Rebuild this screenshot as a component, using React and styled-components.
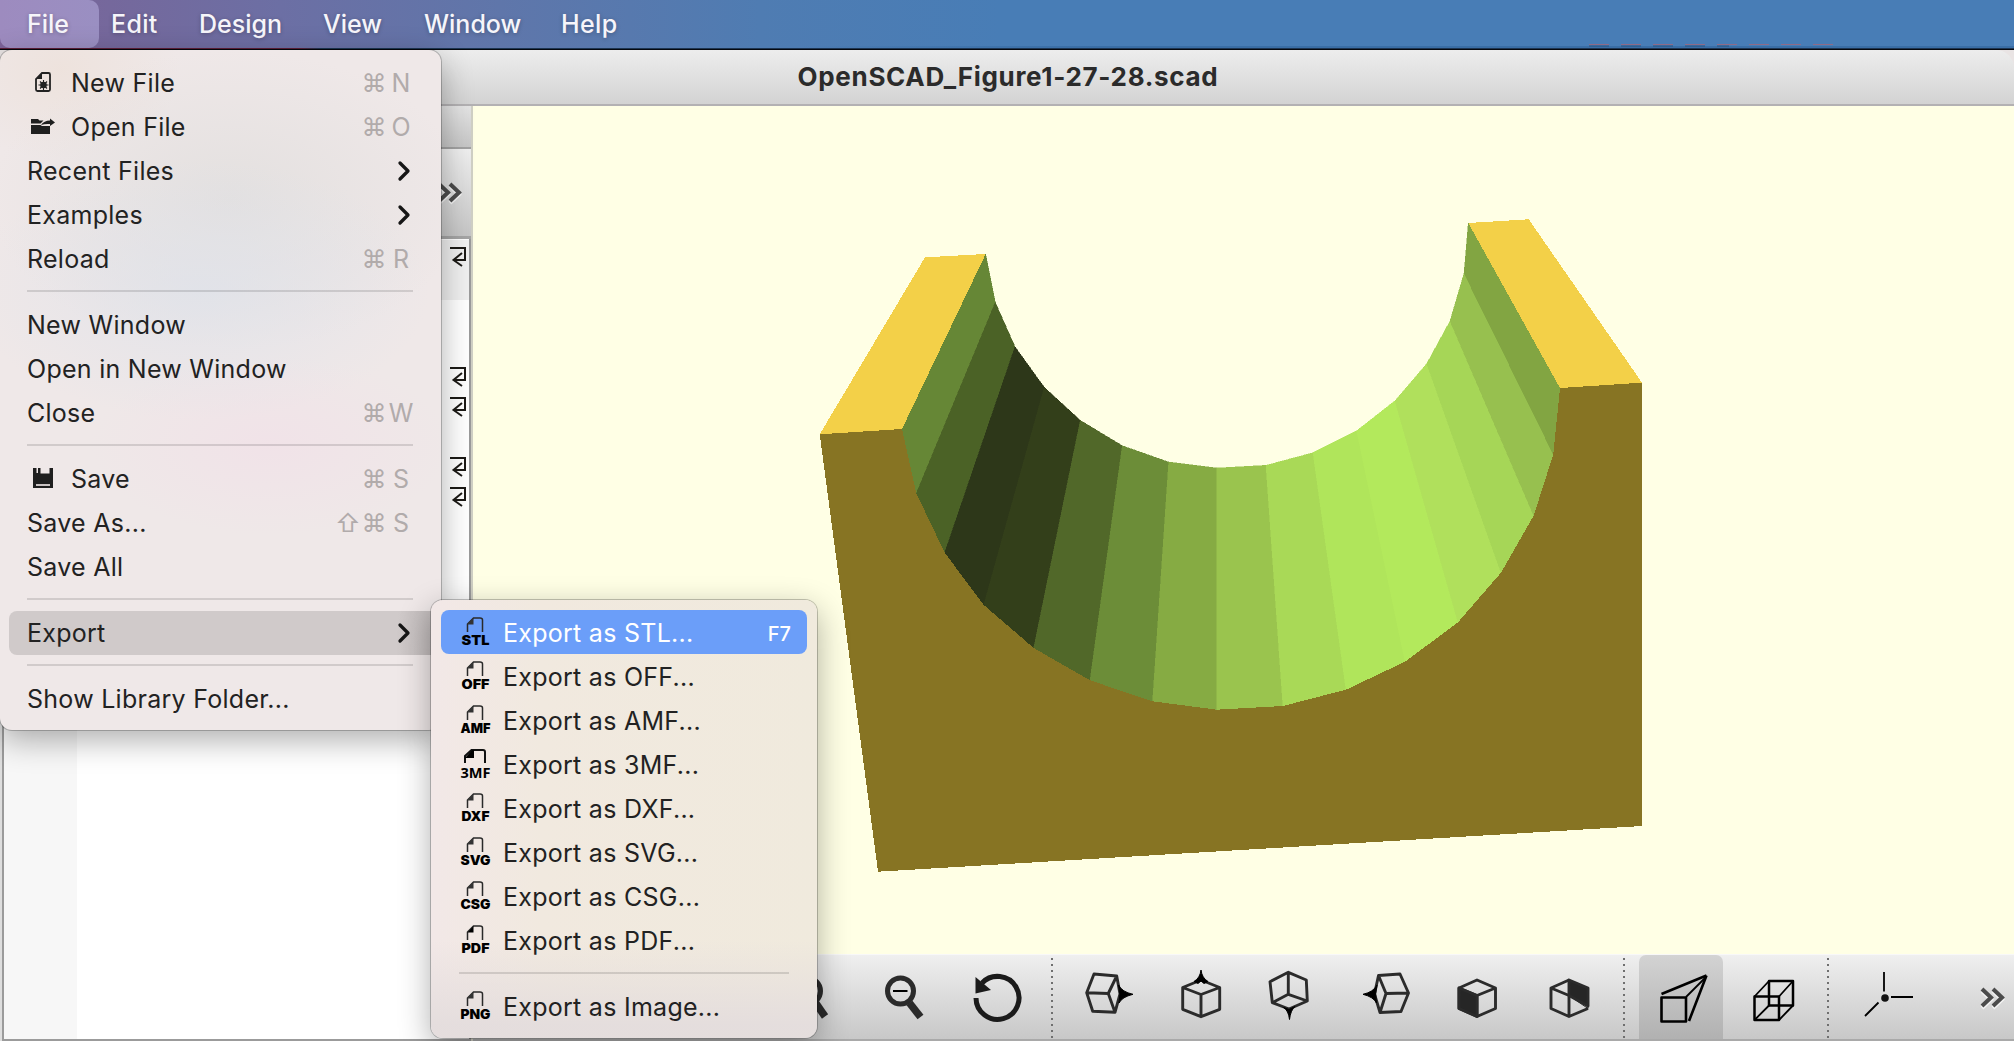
import React from "react";
import styled, { createGlobalStyle, css } from "styled-components";

const Global = createGlobalStyle`
  * { box-sizing: border-box; }
  body { margin: 0; overflow: hidden; font-family: Inter, "Liberation Sans", sans-serif; }
`;

const Desktop = styled.div`
  position: relative;
  display: flex;
  flex-direction: column;
  width: 2014px;
  height: 1041px;
  overflow: hidden;
  background: #e9e4e4;
`;

const MenuBar = styled.nav`
  display: flex;
  flex: none;
  height: 50px;
  padding-bottom: 2px;
  background:
    linear-gradient(90deg, #5c1f38 0 300px, #1d3552 320px) 0 48px / 100% 1px no-repeat,
    linear-gradient(#05080f, #05080f) 0 49px / 100% 1px no-repeat,
    repeating-linear-gradient(90deg, rgba(190, 95, 105, 0.6) 0 20px, transparent 20px 32px) 1589px 44px / 246px 1px no-repeat,
    repeating-linear-gradient(90deg, rgba(30, 60, 95, 0.3) 0 20px, transparent 20px 32px) 1589px 45px / 140px 2px no-repeat,
    linear-gradient(90deg, rgba(58, 110, 166, 0), #3a6ea6 300px) 800px 46px / 1214px 2px no-repeat,
    linear-gradient(90deg, #7d6399 0, #75689c 110px, #6c6fa4 280px, #5f76aa 500px, #4f7cb2 760px, #487db6 1000px);
`;

const MenuTitle = styled.span`
  display: flex;
  align-items: center;
  width: ${(p) => p.$w}px;
  padding-left: ${(p) => p.$pad}px;
  border-radius: 0 10px 10px 10px;
  background: ${(p) => (p.$open ? "linear-gradient(90deg, #9d8bbf, #9a8fc2)" : "none")};
  color: #f6f5fa;
  font-size: 25px;
  font-weight: 500;
  letter-spacing: ${(p) => p.$track || 0}px;
  white-space: nowrap;
  text-shadow: 0 1px 4px rgba(0, 0, 0, 0.25);
`;

const Window = styled.main`
  display: flex;
  flex-direction: column;
  flex: 1;
  min-height: 0;
  overflow: hidden;
  border-radius: 12px 18px 0 0;
`;

const TitleBar = styled.header`
  display: flex;
  flex: none;
  align-items: center;
  justify-content: center;
  height: 56px;
  padding: 0 0 2px 2px;
  border-bottom: 2px solid #b3b1b3;
  background: linear-gradient(#ededed, #d3d3d3);
  color: #2b2b2b;
  font-size: 26px;
  font-weight: 700;
  letter-spacing: 0.68px;
`;

const Body = styled.div`
  display: flex;
  flex: 1;
  min-height: 0;
`;

const EditorPane = styled.section`
  display: flex;
  flex-direction: column;
  flex: none;
  width: 473px;
  border-right: 2px solid #cfcfc4;
  background: #dedede;
`;

const DockTitle = styled.div`
  flex: none;
  height: 43px;
  border-bottom: 2px solid #a2a2a2;
  background: linear-gradient(#e4e4e4, #c6c6c6);
`;

const EditorTools = styled.div`
  display: flex;
  flex: none;
  align-items: center;
  justify-content: flex-end;
  height: 90px;
  padding: 1px 4px 0 0;
  border-bottom: 3px solid #a5a5a5;
  background: linear-gradient(#efefef, #c6c6c6);
`;

const CodeArea = styled.div`
  display: flex;
  flex: 1;
  min-height: 0;
  margin-left: 2px;
  border: solid #9b9b9b;
  border-width: 0 2px 2px 2px;
  background: #fff;
`;

const Gutter = styled.div`
  width: 73px;
  background: #f7f7f7;
`;

const Lines = styled.div`
  flex: 1;
  padding-top: 1px;
`;

const CodeLine = styled.div`
  display: flex;
  justify-content: flex-end;
  height: 30px;
  padding: 6px 2px 0 0;
  background: ${(p) => (p.$current ? "#f0f0f0" : "none")};
`;

const Viewer = styled.section`
  display: flex;
  flex-direction: column;
  flex: 1;
  min-width: 0;
  background: #ffffe5;
`;

const Scene = styled.svg`
  display: block;
  flex: 1;
  width: 1541px;
  min-height: 0;
`;

const Toolbar = styled.div`
  display: flex;
  flex: none;
  height: 87px;
  padding-left: 287px;
  border-top: 1px solid #f8f8f8;
  border-bottom: 2px solid #a9a9a9;
  background: linear-gradient(#efefef, #c8c8c8);
`;

const Tool = styled.span`
  width: ${(p) => p.$w}px;
  height: 84px;
  border-radius: 7px 7px 0 0;
  background: ${(p) => (p.$active ? "linear-gradient(#d3d3d3, #b1b1b1)" : "none")};
  svg { display: block; }
`;

const Dots = styled.i`
  width: 2px;
  height: 80px;
  margin: 3px ${(p) => p.$after}px 0 0;
  background: repeating-linear-gradient(#6f6f6f 0 2px, transparent 2px 6px);
`;

const MoreSlot = styled.span`
  padding: 31px 0 0 4px;
`;

const panel = css`
  position: absolute;
  display: flex;
  flex-direction: column;
  color: #222;
  box-shadow: 0 0 0 1px rgba(0, 0, 0, 0.22), 0 10px 32px rgba(0, 0, 0, 0.32);
`;

const FileMenu = styled.div`
  ${panel}
  left: 0;
  top: 50px;
  width: 441px;
  height: 680px;
  padding-top: 11px;
  border-radius: 12px;
  background:
    radial-gradient(ellipse 180px 90px at 270px 395px, rgba(242, 222, 232, 0.55), transparent),
    radial-gradient(ellipse 230px 130px at 200px 240px, rgba(222, 226, 234, 0.75), transparent),
    radial-gradient(ellipse 240px 150px at 230px 150px, rgba(224, 222, 221, 0.8), transparent),
    radial-gradient(ellipse 120px 90px at 60px 20px, rgba(236, 221, 210, 0.5), transparent),
    #efe8e8;
`;

const ExportMenu = styled.div`
  ${panel}
  left: 431px;
  top: 600px;
  width: 386px;
  height: 438px;
  padding-top: 10px;
  border-radius: 12px;
  background:
    linear-gradient(rgba(228, 221, 221, 0) 340px, rgba(228, 221, 221, 0.95) 425px),
    linear-gradient(90deg, #f2e8e7 0, #f1e9df 110px, #f0eadd 100%);
`;

const Item = styled.div`
  display: flex;
  flex: none;
  align-items: center;
  height: 44px;
  margin: 0 ${(p) => (p.$sub ? 10 : 9)}px;
  padding: 0 ${(p) => (p.$sub ? 16 : 17)}px 0 18px;
  border-radius: 8px;
  background: ${(p) => p.$bg || "none"};
  color: ${(p) => p.$color || "#222"};
`;

const OpenItem = styled(Item)`
  margin-right: 0;
  padding-right: 26px;
  background: linear-gradient(90deg, #d0caca 90%, #bdb7b7);
`;

const IconCell = styled.span`
  flex: none;
  width: 44px;
  height: 44px;
  svg { display: block; }
`;

const Label = styled.span`
  flex: 1;
  padding-top: ${(p) => p.$drop || 0}px;
  font-size: 25px;
  letter-spacing: ${(p) => p.$track ?? 0.27}px;
  white-space: nowrap;
`;

const Keys = styled.span`
  display: flex;
  color: #b1abab;
  font-size: 25px;
`;

const Key = styled.span`
  width: ${(p) => p.$w}px;
  text-align: center;
`;

const FKey = styled.span`
  padding-top: 4px;
  color: #fff;
  font-size: 20px;
  font-weight: 500;
`;

const Rule = styled.hr`
  flex: none;
  width: auto;
  height: 2px;
  margin: ${(p) => (p.$sub ? "10px 28px 10px 28px" : "9px 28px 11px 27px")};
  border: 0;
  background: rgba(0, 0, 0, 0.125);
`;

const ArrowSvg = styled.svg`
  margin-right: 3px;
`;

const Arrow = () => (
  <ArrowSvg width="16" height="22" viewBox="0 0 16 22">
    <path d="M4 3 12 11 4 19" fill="none" stroke="#161616" strokeWidth="3.300" strokeLinecap="round" strokeLinejoin="round" />
  </ArrowSvg>
);

const More = () => (
  <svg width="30" height="24" viewBox="0 0 30 24">
    <g fill="none" strokeWidth="4">
      <path d="M2 4 11 12.500 2 21M13 4 22 12.500 13 21" stroke="#f3f3f3" transform="translate(0 1)" />
      <path d="M2 3 11 11.500 2 20M13 3 22 11.500 13 20" stroke="#4c4c4c" />
    </g>
  </svg>
);

const Eol = () => (
  <svg width="17" height="22" viewBox="0 0 17 22" fill="none" stroke="#1c1a16" strokeWidth="2">
    <path d="M0 2H15V14H4M12 7 3.500 14 12 20" />
  </svg>
);

const NewIcon = () => (
  <svg width="44" height="44" viewBox="27 61 44 44">
    <path d="M42 73H48.500Q50 73 50 74.500V89.500Q50 91 48.500 91H37.500Q36 91 36 89.500V79Z" fill="none" stroke="#222" strokeWidth="1.800" />
    <path d="M36 79 42 73V79Z" fill="#222" />
    <circle cx="43.500" cy="85" r="3.300" fill="#222" />
    <path d="M43.500 80V90M38.500 85H48.500M40 81.500 47 88.500M47 81.500 40 88.500" stroke="#222" strokeWidth="1.100" />
  </svg>
);

const OpenIcon = () => (
  <svg width="44" height="44" viewBox="27 105 44 44" fill="#1f1f1f">
    <path d="M31 119H38L39.500 120.500H43.500L40.500 123.500H31Z" />
    <path d="M31 125H40.500L42 126H50V134H31Z" />
    <path d="M41 125Q44 120.500 50 120.500V118.500L55 122.500L50 126V124Q45 123.500 41 125Z" />
  </svg>
);

const SaveIcon = () => (
  <svg width="44" height="44" viewBox="27 457 44 44">
    <path d="M33 468H53V488H33Z" fill="#1f1f1f" />
    <path d="M36.500 468H38V473H36.500ZM40.500 468H49.500V473.500H40.500Z" fill="#efe8e8" />
    <path d="M36 484H50V486H36Z" fill="#c9c3c3" />
  </svg>
);

const FormatIcon = ({ text, bold }) => {
  const wide = text === "3MF";
  const narrow = ["STL", "OFF", "DXF", "PDF"].includes(text);
  return (
    <svg width="44" height="44" viewBox="459 610 44 44">
      {wide ? (
        <path d="M465 631V624L471.500 618H483Q485 618 485 620V631" fill="none" stroke="#111" strokeWidth="2" />
      ) : (
        <path d="M467.500 632V624L473.500 618H480Q482.500 618 482.500 620V632" fill="none" stroke="#2a2a2a" strokeWidth="1.500" />
      )}
      <path d={wide ? "M465 626 472 618H474V626Z" : "M467.500 624.500 473.500 618V624.500Z"} fill={bold ? "#000" : "#333"} />
      <text
        x="475.500" y={wide ? 645.5 : 645} textAnchor="middle"
        fontFamily={wide ? "Open Sans" : "Inter"} fontSize={wide ? 14.5 : 13.5} fontWeight={wide ? 700 : 900} fill="#000"
        textLength={narrow ? 28 : 30} lengthAdjust="spacingAndGlyphs"
      >
        {text}
      </text>
    </svg>
  );
};

const FACES = ["#668736", "#4b6226", "#2d3719", "#333f1a", "#516829", "#6c8d38", "#86ab43", "#9ac44e", "#a9d957", "#b0e55b", "#b3e95c", "#b0e05c", "#a6d657", "#97c04f", "#82a542"];
const FRONT = [[902, 429], [916.3, 493.3], [944.7, 552.7], [983.8, 605], [1033.7, 648], [1090, 680.3], [1152.6, 701.3], [1216.9, 709.7], [1282.9, 706], [1346, 689.7], [1405.1, 661.7], [1458, 622.3], [1501, 572.7], [1533.7, 515.7], [1553.3, 454.3], [1560, 388]];
const BACK = [[985.7, 254], [995.3, 302.3], [1015, 346.7], [1044.3, 387.3], [1080.3, 420.3], [1122.3, 445.7], [1168.7, 462], [1217, 468], [1266, 465.3], [1313, 452.7], [1356.7, 430.7], [1395, 400.7], [1426.7, 363.7], [1450, 321], [1464, 273.3], [1468.3, 223]];
const pts = (a) => a.map((p) => p.join(",")).join(" ");

const Model = () => (
  <Scene viewBox="473 106 1541 848" preserveAspectRatio="xMinYMin meet" shapeRendering="crispEdges">
    {FACES.map((c, i) => (
      <polygon key={i} fill={c} stroke={c} strokeWidth="0.500" points={pts([BACK[i], BACK[i + 1], FRONT[i + 1], FRONT[i]])} />
    ))}
    <polygon fill="#f3d048" points="925,257.300 985.700,254 902,429 819.700,434.300" />
    <polygon fill="#f3d048" points="1468.300,223 1528.700,219.300 1642,382.700 1560,388" />
    <polygon fill="#877423" points={pts([[819.7, 434.3], ...FRONT, [1642, 382.7], [1642, 826], [878, 871.7]])} />
  </Scene>
);

const ToolIcon = ({ x, w, children }) => (
  <svg width={w} height="84" viewBox={`${x} 955 ${w} 84`} fill="none" stroke="#2b2b2b" strokeWidth="2.900" strokeLinejoin="round">
    {children}
  </svg>
);

const TOOLS = [
  { x: 760, w: 94, art: <><circle cx="807.500" cy="991" r="13" strokeWidth="5" /><path d="M815 1002 825 1016.500" strokeWidth="7.500" /></> },
  { x: 854, w: 93, art: <><circle cx="900.500" cy="991" r="13" strokeWidth="5" /><path d="M893 991H907.500" stroke="#000" strokeWidth="2" /><path d="M909.500 1003 920.500 1017" strokeWidth="7.500" /></> },
  { x: 947, w: 104, art: <><path d="M976 998A21.500 21.500 0 1 0 982 983" stroke="#1b1b1b" strokeWidth="5" /><path d="M975.500 977V993.500L991 990Z" fill="#1b1b1b" stroke="none" /></> },
  { dots: true },
  { x: 1053, w: 100, art: <><path d="M1094 974 1116.700 976 1120 994 1115 1012.300 1092.700 1011.300 1086.700 992.700ZM1086.700 992.700 1108.300 993.500 1116.700 976M1108.300 993.500 1115 1012.300" /><path d="M1118.500 985Q1122 992 1133 994.300 1122 997 1119 1003Q1121 994 1118.500 985Z" fill="#000" stroke="#000" strokeWidth="1" /></> },
  { x: 1153, w: 92, art: <><path d="M1201 980 1182.700 987.500V1009.300L1201 1016.700 1219.700 1009.300V987.500ZM1182.700 987.500 1201 994.500 1219.700 987.500M1201 994.500V1016.700" /><path d="M1201 970Q1202 978 1208 981.500L1204 983.500 1201 981 1198 983.500 1194 981.500Q1200 978 1201 970Z" fill="#000" stroke="#000" strokeWidth="1" /></> },
  { x: 1245, w: 92, art: <><path d="M1288.300 972.300 1270 981.700 1272.300 1002.700 1289 1009 1307.300 1001 1306.300 980ZM1288.300 972.300V994.300L1272.300 1002.700M1288.300 994.300 1307.300 1001" /><path d="M1289.500 1019.500Q1288.500 1010.500 1283.500 1007.500L1289 1009.500 1295 1006.500Q1290.500 1010.500 1289.500 1019.500Z" fill="#000" stroke="#000" strokeWidth="1" /></> },
  { x: 1337, w: 94, art: <><path d="M1378.500 975.500 1400 974 1408.500 993 1401 1011.500 1380 1012.500 1374.500 994ZM1378.500 975.500 1386 993.500 1408.500 993M1386 993.500 1380 1012.500" /><path d="M1377 985Q1373.500 992 1363 994.300 1373.500 997 1376.500 1003Q1374.500 994 1377 985Z" fill="#000" stroke="#000" strokeWidth="1" /></> },
  { x: 1431, w: 92, art: <><path d="M1477 980 1459 988V1008.500L1477 1016.500 1495.500 1008.500V988ZM1459 988 1477 995.500 1495.500 988M1477 995.500V1016.500" /><path d="M1459 988 1477 995.500V1016.500L1459 1008.500Z" fill="#262626" /></> },
  { x: 1523, w: 100, art: <><path d="M1588 1008.500 1569 1016.500 1551 1008.500V988L1569 980M1551 988 1569 995.500V1016.500" /><path d="M1569 995.500 1588 1008.500V1006" strokeWidth="1" /><path d="M1569 980 1588 988V1006L1569 995.500Z" fill="#262626" /></> },
  { dots: true, after: 14 },
  { x: 1639, w: 84, active: true, art: <g stroke="#000" strokeWidth="2.600"><path d="M1661.500 997.500H1686V1021.500H1661.500ZM1661.500 994 1706.500 975.500M1689 1021 1706.500 975.500" /><path d="M1686 997 1706 977" strokeWidth="1.800" /></g> },
  { x: 1723, w: 104, art: <g stroke="#000" strokeWidth="2.500"><path d="M1754.500 996.500H1779V1020H1754.500ZM1769 981H1793V1005.500H1769Z" /><path d="M1754.500 996.500 1769 981M1779 996.500 1793 981M1779 1020 1793 1005.500M1754.500 1020 1769 1005.500" strokeWidth="1.800" /></g> },
  { dots: true },
  { x: 1829, w: 147, art: <g stroke="#000" strokeWidth="1.800"><path d="M1884 972V991.500M1891 997H1913M1878.500 1002.500 1865 1016" /><circle cx="1885" cy="998" r="3.800" fill="#111" stroke="none" /></g> },
];

const FILE_ITEMS = [
  { label: "New File", icon: <NewIcon />, key: "N" },
  { label: "Open File", icon: <OpenIcon />, key: "O" },
  { label: "Recent Files", arrow: true },
  { label: "Examples", arrow: true },
  { label: "Reload", key: "R" },
  null,
  { label: "New Window" },
  { label: "Open in New Window" },
  { label: "Close", key: "W" },
  null,
  { label: "Save", icon: <SaveIcon />, key: "S" },
  { label: "Save As...", key: "S", shift: true },
  { label: "Save All" },
  null,
  { label: "Export", arrow: true, open: true },
  null,
  { label: "Show Library Folder..." },
];

const FORMATS = ["STL", "OFF", "AMF", "3MF", "DXF", "SVG", "CSG", "PDF"];

const Row = ({ it }) => {
  const Base = it.open ? OpenItem : Item;
  return (
    <Base>
      {it.icon && <IconCell>{it.icon}</IconCell>}
      <Label>{it.label}</Label>
      {it.arrow && <Arrow />}
      {it.key && (
        <Keys>
          {it.shift && <Key $w={26}>⇧</Key>}
          <Key $w={26}>⌘</Key>
          <Key $w={28}>{it.key}</Key>
        </Keys>
      )}
    </Base>
  );
};

export default function App() {
  return (
    <Desktop>
      <Global />
      <MenuBar>
        <MenuTitle $w={99} $pad={27} $open>File</MenuTitle>
        <MenuTitle $w={86} $pad={12} $track={0.3}>Edit</MenuTitle>
        <MenuTitle $w={126} $pad={14}>Design</MenuTitle>
        <MenuTitle $w={100} $pad={12}>View</MenuTitle>
        <MenuTitle $w={137} $pad={13}>Window</MenuTitle>
        <MenuTitle $w={100} $pad={13} $track={0.4}>Help</MenuTitle>
      </MenuBar>
      <Window>
        <TitleBar>OpenSCAD_Figure1-27-28.scad</TitleBar>
        <Body>
          <EditorPane>
            <DockTitle />
            <EditorTools><More /></EditorTools>
            <CodeArea>
              <Gutter />
              <Lines>
                {["e", "c", "", "", "e", "e", "", "e", "e"].map((l, i) => (
                  <CodeLine key={i} $current={i < 2}>{l === "e" && <Eol />}</CodeLine>
                ))}
              </Lines>
            </CodeArea>
          </EditorPane>
          <Viewer>
            <Model />
            <Toolbar>
              {TOOLS.map((t, i) =>
                t.dots ? (
                  <Dots key={i} $after={t.after || 0} />
                ) : (
                  <Tool key={i} $w={t.w} $active={t.active}><ToolIcon x={t.x} w={t.w}>{t.art}</ToolIcon></Tool>
                )
              )}
              <MoreSlot><More /></MoreSlot>
            </Toolbar>
          </Viewer>
        </Body>
      </Window>
      <FileMenu>
        {FILE_ITEMS.map((it, i) => (it ? <Row key={i} it={it} /> : <Rule key={i} />))}
      </FileMenu>
      <ExportMenu>
        {FORMATS.map((f, i) => (
          <Item key={f} $sub $bg={i === 0 ? "#6b9ef9" : undefined} $color={i === 0 ? "#fff" : undefined}>
            <IconCell><FormatIcon text={f} bold={f === "3MF" || f === "PDF"} /></IconCell>
            <Label $drop={2}>{`Export as ${f}...`}</Label>
            {i === 0 && <FKey>F7</FKey>}
          </Item>
        ))}
        <Rule $sub />
        <Item $sub>
          <IconCell><FormatIcon text="PNG" /></IconCell>
          <Label $drop={2}>Export as Image...</Label>
        </Item>
      </ExportMenu>
    </Desktop>
  );
}
